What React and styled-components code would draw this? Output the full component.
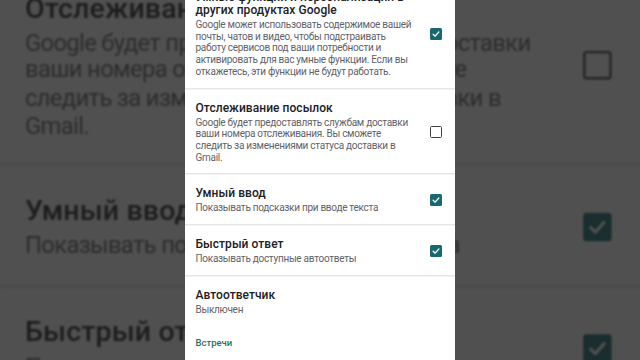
import React from "react";
import styled, { createGlobalStyle } from "styled-components";

const GlobalStyle = createGlobalStyle`
  html, body {
    margin: 0;
    padding: 0;
    width: 640px;
    height: 360px;
    overflow: hidden;
    background: #505050;
    font-family: Roboto, "Noto Sans", "Liberation Sans", sans-serif;
  }
  #root {
    width: 640px;
    height: 360px;
  }
`;

// списки настроек (одни и те же для фона и для телефона)
const rows = [
  {
    title: "Умные функции и персонализация в других продуктах Google",
    desc: "Google может использовать содержимое вашей почты, чатов и видео, чтобы подстраивать работу сервисов под ваши потребности и активировать для вас умные функции. Если вы откажетесь, эти функции не будут работать.",
    checked: true,
  },
  {
    title: "Отслеживание посылок",
    desc: "Google будет предоставлять службам доставки ваши номера отслеживания. Вы сможете следить за изменениями статуса доставки в Gmail.",
    checked: false,
  },
  {
    title: "Умный ввод",
    desc: "Показывать подсказки при вводе текста",
    checked: true,
  },
  {
    title: "Быстрый ответ",
    desc: "Показывать доступные автоответы",
    checked: true,
  },
  {
    title: "Автоответчик",
    desc: "Выключен",
    last: true,
  },
];

const SCALE = 2.38;

const Stage = styled.div`
  position: relative;
  width: 640px;
  height: 360px;
  display: flex;
  justify-content: center;
  overflow: hidden;
`;

const Backdrop = styled.div`
  position: absolute;
  inset: 0;
  overflow: hidden;
  background: #fff;

  &::after {
    content: "";
    position: absolute;
    inset: 0;
    background: rgba(27, 27, 27, 0.77);
  }
`;

const BackdropContent = styled.div`
  width: 270px;
  transform-origin: 0 0;
  transform: scale(${SCALE}) translateY(-125.6px);
  filter: blur(0.35px);
`;

const Phone = styled.div`
  position: relative;
  z-index: 1;
  width: 270px;
  height: 360px;
  background: #fff;
  overflow: hidden;
`;

const List = styled.div`
  display: flex;
  flex-direction: column;
  margin-top: ${(p) => p.$scroll}px;
`;

const Row = styled.div`
  display: flex;
  align-items: center;
  padding: 12px 0 10px 10.5px;
  border-bottom: ${(p) => (p.$last ? "none" : "1px solid #e6e6e6")};
  box-shadow: ${(p) => (p.$last ? "none" : "0 1px 0 #f3f3f3")};
`;

const RowText = styled.div`
  width: 220px;
  display: flex;
  flex-direction: column;
  gap: 2px;
`;

const Title = styled.div`
  font-size: 12px;
  line-height: ${(p) => (p.$multi ? 13 : 14)}px;
  font-weight: 500;
  color: #202124;
  letter-spacing: 0.05px;
`;

const Desc = styled.div`
  font-size: 10px;
  line-height: 11.7px;
  letter-spacing: -0.28px;
  color: #5f6368;
`;

const Check = styled.span`
  margin-left: auto;
  margin-right: 13px;
  width: 12px;
  height: 12px;
  box-sizing: border-box;
  border-radius: 1.5px;
  display: flex;
  align-items: center;
  justify-content: center;
  background: ${(p) => (p.$on ? "#17686f" : "#fff")};
  border: ${(p) => (p.$on ? "none" : "1.5px solid #3c4043")};
`;

const SectionHeader = styled.div`
  padding: 12px 0 0 10.5px;
  font-size: 9.5px;
  line-height: 12px;
  font-weight: 500;
  color: #1a7366;
`;

const Checkbox = ({ on }) => (
  <Check $on={on}>
    {on && (
      <svg width="10" height="10" viewBox="0 0 12 12">
        <polyline
          points="2.6,6.3 5,8.6 9.4,3.6"
          fill="none"
          stroke="#fff"
          strokeWidth="1.6"
          strokeLinecap="round"
          strokeLinejoin="round"
        />
      </svg>
    )}
  </Check>
);

const Settings = ({ scroll = 0 }) => (
  <List $scroll={scroll}>
    {rows.map((r, i) => (
      <Row key={i} $last={r.last}>
        <RowText>
          <Title $multi={r.title.length > 30}>{r.title}</Title>
          <Desc>{r.desc}</Desc>
        </RowText>
        {r.checked !== undefined && <Checkbox on={r.checked} />}
      </Row>
    ))}
    <SectionHeader>Встречи</SectionHeader>
  </List>
);

const App = () => {
  return (
    <>
      <GlobalStyle />
      <Stage>
        <Backdrop>
          <BackdropContent>
            <Settings />
          </BackdropContent>
        </Backdrop>
        <Phone>
          <Settings scroll={-21} />
        </Phone>
      </Stage>
    </>
  );
};

export default App;
